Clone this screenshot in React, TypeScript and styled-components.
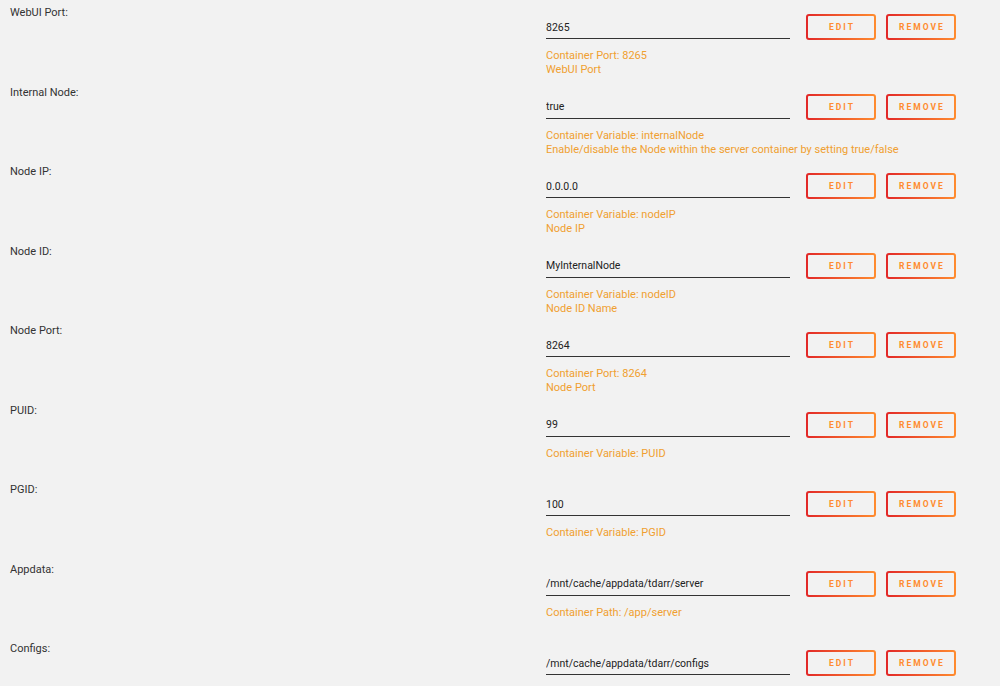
import React from "react";
import styled, { createGlobalStyle } from "styled-components";

type Setting = {
  label: string;
  value: string;
  help: string[];
};

const settings: Setting[] = [
  { label: "WebUI Port:", value: "8265", help: ["Container Port: 8265", "WebUI Port"] },
  {
    label: "Internal Node:",
    value: "true",
    help: [
      "Container Variable: internalNode",
      "Enable/disable the Node within the server container by setting true/false",
    ],
  },
  { label: "Node IP:", value: "0.0.0.0", help: ["Container Variable: nodeIP", "Node IP"] },
  { label: "Node ID:", value: "MyInternalNode", help: ["Container Variable: nodeID", "Node ID Name"] },
  { label: "Node Port:", value: "8264", help: ["Container Port: 8264", "Node Port"] },
  { label: "PUID:", value: "99", help: ["Container Variable: PUID"] },
  { label: "PGID:", value: "100", help: ["Container Variable: PGID"] },
  { label: "Appdata:", value: "/mnt/cache/appdata/tdarr/server", help: ["Container Path: /app/server"] },
  { label: "Configs:", value: "/mnt/cache/appdata/tdarr/configs", help: [] },
];

const GlobalStyle = createGlobalStyle`
  html, body {
    margin: 0;
    padding: 0;
    background: #f2f2f2;
    font-family: Roboto, "Open Sans", sans-serif;
    overflow: hidden;
  }
`;

export default function App() {
  return (
    <>
      <GlobalStyle />
      <Settings>
        {settings.map((s) => (
          <Row key={s.label}>
            <Label>{s.label}</Label>
            <Field>
              <InputLine>
                <TextInput defaultValue={s.value} />
                <OutlineButton>Edit</OutlineButton>
                <OutlineButton>Remove</OutlineButton>
              </InputLine>
              {s.help.length > 0 && (
                <Help>
                  {s.help.map((h) => (
                    <div key={h}>{h}</div>
                  ))}
                </Help>
              )}
            </Field>
          </Row>
        ))}
      </Settings>
    </>
  );
}

const Settings = styled.div`
  display: grid;
  grid-auto-rows: 79.5px;
`;

const Row = styled.div`
  display: grid;
  grid-template-columns: 536px 1fr;
  padding-left: 10px;
`;

const Label = styled.div`
  padding-top: 5px;
  font-size: 11px;
  line-height: 16px;
  color: #333;
`;

const Field = styled.div`
  padding-top: 14px;
`;

const InputLine = styled.div`
  display: flex;
  align-items: flex-start;
  gap: 10px;
`;

const TextInput = styled.input`
  box-sizing: border-box;
  width: 244px;
  height: 25px;
  margin: 0 6px 0 0;
  padding: 2px 0 0;
  border: none;
  border-bottom: 1px solid #333;
  background: transparent;
  font-family: inherit;
  font-size: 10.5px;
  color: #222;
  outline: none;
`;

const OutlineButton = styled.button`
  box-sizing: border-box;
  width: 70px;
  height: 26px;
  padding: 0 0 0 2px;
  border: 2px solid transparent;
  border-radius: 3px;
  background:
    linear-gradient(#f2f2f2, #f2f2f2) padding-box,
    linear-gradient(90deg, #e22828, #ff8c2f) border-box;
  font-family: inherit;
  font-size: 8.5px;
  font-weight: 700;
  letter-spacing: 2px;
  text-transform: uppercase;
  color: #ff8c2f;
  cursor: pointer;
`;

const Help = styled.div`
  margin-top: 9px;
  font-size: 11px;
  line-height: 14px;
  color: #f0a030;
`;
